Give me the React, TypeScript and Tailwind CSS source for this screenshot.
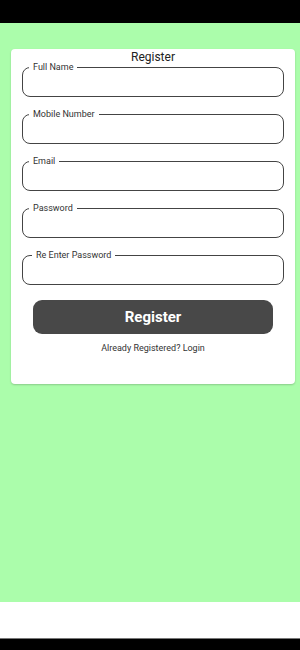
import React from "react";

const fields = [
  { label: "Full Name", ml: "ml-[6px]" },
  { label: "Mobile Number", ml: "ml-[6px]" },
  { label: "Email", ml: "ml-[6px]" },
  { label: "Password", ml: "ml-[6px]" },
  { label: "Re Enter Password", ml: "ml-[9px]" },
];

export default function App() {
  return (
    <div className="w-[300px] h-[650px] flex flex-col bg-black overflow-hidden" style={{ fontFamily: "Roboto, 'Noto Sans', sans-serif" }}>
      <div className="h-[23px] bg-black shrink-0" />
      <div className="h-[579px] bg-[#abfdab] shrink-0 pt-[26px] pl-[11px] pr-[5px]">
        <div className="bg-white rounded-[4px] shadow-[0_1px_2px_rgba(0,0,0,0.2)] px-[11px] pt-[2px] pb-[31px] flex flex-col">
          <div className="text-center text-[12px] leading-[13px] text-[#222]">Register</div>
          <div className="flex flex-col gap-3 mt-[-2px]">
            {fields.map((f) => (
              <fieldset key={f.label} className="border border-[#444] rounded-[8px] px-0 m-0 min-w-0">
                <legend className={`${f.ml} px-[4px] text-[9px] leading-[10px] text-[#333]`}>{f.label}</legend>
                <input className="block w-full h-[24px] bg-transparent outline-none px-2 text-[12px]" />
              </fieldset>
            ))}
          </div>
          <button className="self-center mt-[15px] w-[240px] h-[34px] rounded-[9px] bg-[#484848] text-white text-[15px] font-bold">
            Register
          </button>
          <div className="text-center text-[9px] leading-[10px] mt-[9px] text-[#333]">Already Registered? Login</div>
        </div>
      </div>
      <div className="h-[36px] bg-white shrink-0" />
      <div className="h-[1px] bg-[#777] shrink-0" />
      <div className="flex-1 bg-black" />
    </div>
  );
}
